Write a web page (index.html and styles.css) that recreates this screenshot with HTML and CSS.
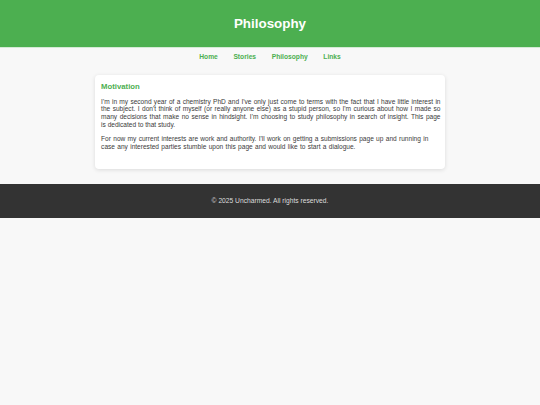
FILE: index.html
```html
<!DOCTYPE html>
<html lang="en">
<head>
<meta charset="utf-8">
<title>Philosophy</title>
<link rel="stylesheet" href="styles.css">
</head>
<body>
<header class="site-header">
  <h1 class="site-title">Philosophy</h1>
</header>
<nav class="site-nav">
  <a href="#">Home</a>
  <a href="#">Stories</a>
  <a href="#">Philosophy</a>
  <a href="#">Links</a>
</nav>
<main class="content">
  <section class="card">
    <h2 class="card-title">Motivation</h2>
    <p><span class="line fill">I'm in my second year of a chemistry PhD and I've only just come to terms with the fact that I have little interest in</span>
    <span class="line fill">the subject. I don't think of myself (or really anyone else) as a stupid person, so I'm curious about how I made so</span>
    <span class="line fill">many decisions that make no sense in hindsight. I'm choosing to study philosophy in search of insight. This page</span>
    <span class="line">is dedicated to that study.</span></p>
    <p><span class="line wide">For now my current interests are work and authority. I'll work on getting a submissions page up and running in</span>
    <span class="line wide">case any interested parties stumble upon this page and would like to start a dialogue.</span></p>
  </section>
</main>
<footer class="site-footer">
  <p>&copy; 2025 Uncharmed. All rights reserved.</p>
</footer>
</body>
</html>
```
FILE: styles.css
```css
html, body {
  margin: 0;
  padding: 0;
}
body {
  background: #f8f8f8;
  font-family: "Liberation Sans", Arial, sans-serif;
  color: #333;
}
.site-header {
  background: #4caf50;
  height: 47px;
  display: flex;
  align-items: center;
  justify-content: center;
}
.site-title {
  margin: 0;
  color: #fff;
  font-size: 13.4px;
  font-weight: bold;
}
.site-nav {
  display: flex;
  justify-content: center;
  gap: 15.6px;
  padding: 5px 0 6px;
  border-top: 1px solid #d4ead5;
  font-size: 6.7px;
  line-height: 8px;
}
.site-nav a {
  color: #4caf50;
  font-weight: bold;
  text-decoration: none;
}
.content {
  width: 350.6px;
  margin: 7.5px auto 14.7px;
}
.card {
  background: #fff;
  border-radius: 4px;
  box-shadow: 0 1px 4px rgba(0,0,0,0.12);
  padding: 7.3px 4.8px 12px 6.4px;
}
.card-title {
  margin: 0 0 7.1px;
  color: #4caf50;
  font-size: 7.74px;
  line-height: 9px;
}
.card p {
  margin: 0 0 6.9px;
  font-size: 6.57px;
  line-height: 7.6px;
  color: #3a3a3a;
}
.line {
  display: block;
  white-space: nowrap;
}
.fill {
  text-align: justify;
  text-align-last: justify;
}
.wide {
  word-spacing: 0.5px;
}
.site-footer {
  background: #333;
  height: 34px;
  display: flex;
  align-items: center;
  justify-content: center;
}
.site-footer p {
  margin: 0;
  color: #ddd;
  font-size: 6.7px;
}
```
